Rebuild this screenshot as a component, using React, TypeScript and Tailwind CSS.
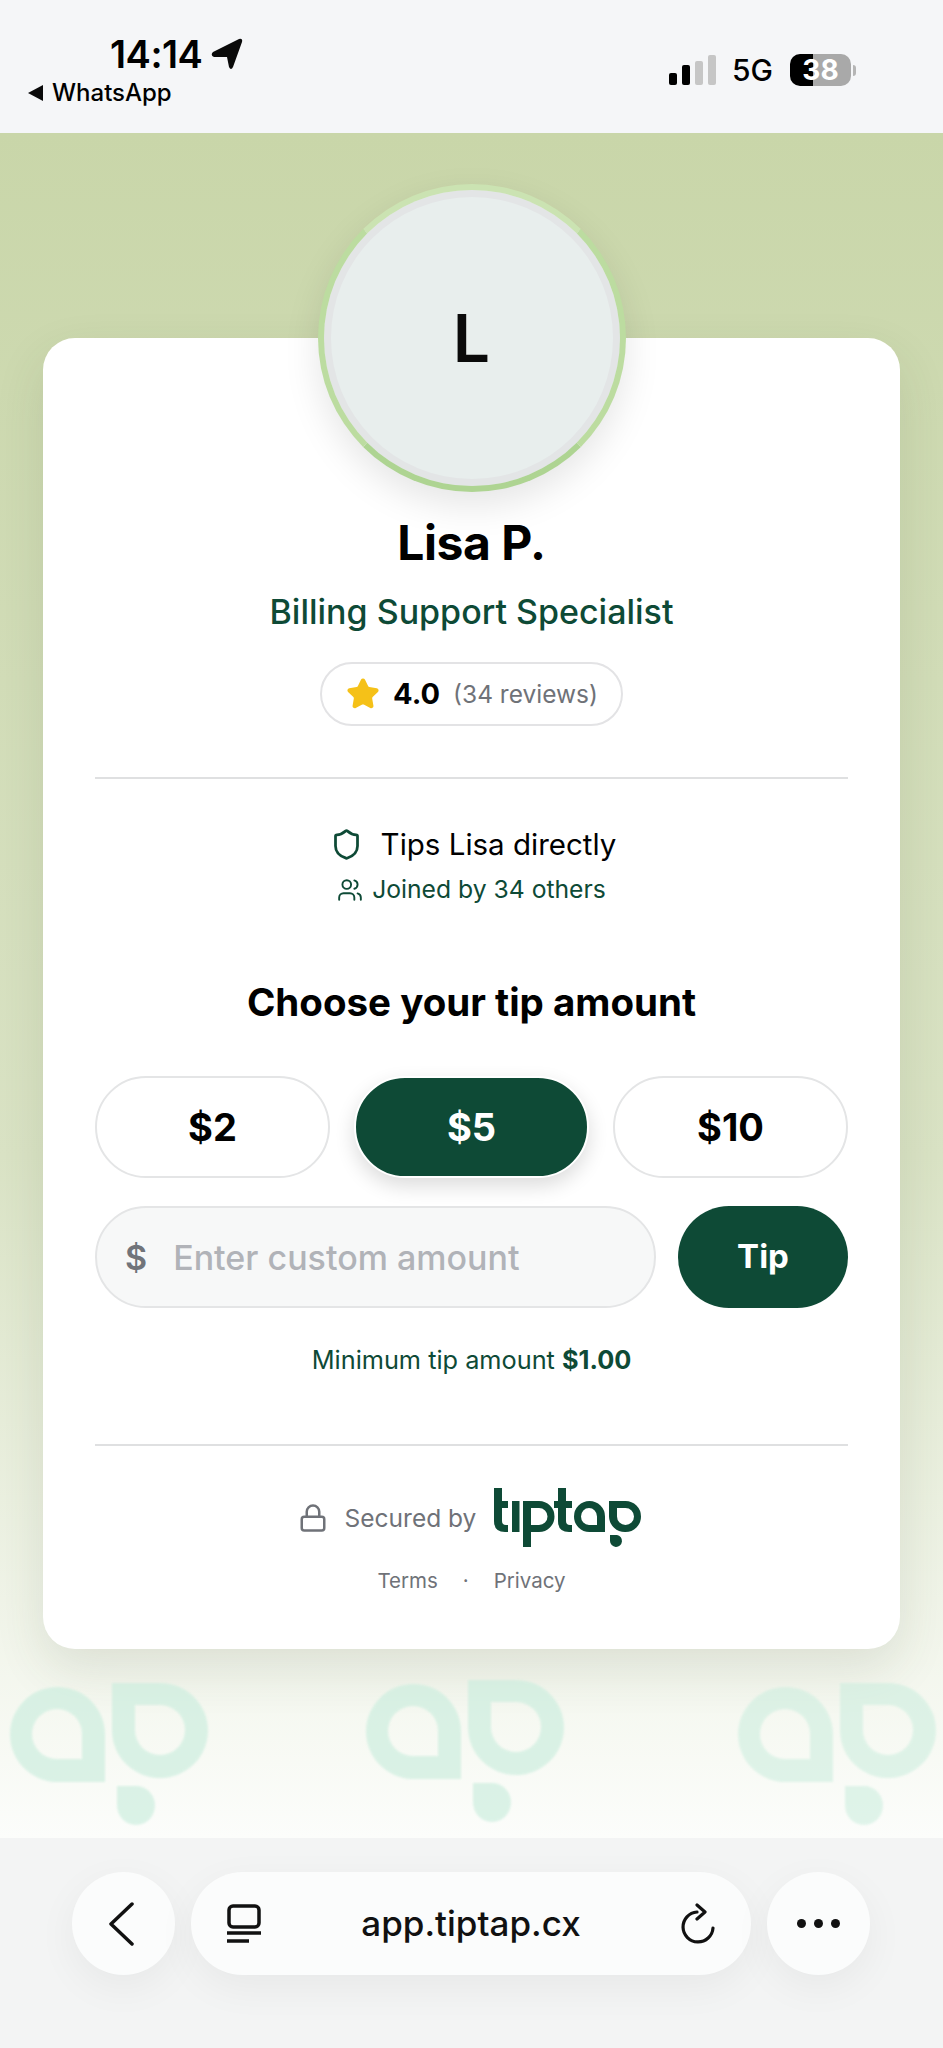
import { Lock, Shield, Star, Users } from 'lucide-react';

const amounts = ['$2', '$5', '$10'];

function TiptapLogo() {
  return (
    <svg width="150" height="62" viewBox="0 0 150 62" fill="#0e4a36" fillRule="evenodd">
      {/* t */}
      <path d="M1 1h8v13h6v7H9v13q0 4 4 4h2v7h-3Q1 45 1 34z" />
      {/* i */}
      <path d="M19 14h7.500v31H19z" />
      {/* p */}
      <path d="M30 14h16a15.500 15.500 0 0 1 0 31h-8v15h-8zM38 21v17h8a8.500 8.500 0 0 0 0-17z" />
      {/* t */}
      <path d="M65 1h8v13h6v7h-6v13q0 4 4 4h2v7h-3q-11 0-11-11V21h-4v-7h4z" />
      {/* a */}
      <path d="M112 45H96.500a15.500 15.500 0 1 1 15.500-15.500zM104 38v-8.500a8 8.500 0 1 0-8 8.500z" />
      {/* p with its dot */}
      <path d="M116 14h16.500a15.500 15.500 0 0 1 0 31 16 16 0 0 1-16.500-15.500zM124 21v8.500a8.500 8.500 0 1 0 8.500-8.500z" />
      <path d="M117 48h7a6 6 0 1 1-7 6z" />
    </svg>
  );
}

function Watermark({ className }: { className: string }) {
  return (
    <svg width="198" height="142" viewBox="0 0 198 142" fill="#cdeedf" fillRule="evenodd" className={className}>
      <path d="M95 99H47.500a47.500 47.500 0 1 1 47.500-47.500zM72 76V51a25 25 0 1 0-25 25z" />
      <path d="M102 0h48a48 47.500 0 1 1-48 47.500zM125 22v25a25 25 0 1 0 25-25z" />
      <path d="M107 103h19a19 19.500 0 1 1-19 19.500z" />
    </svg>
  );
}

export default function App() {
  return (
    <div className="flex h-[2048px] w-[943px] flex-col overflow-hidden bg-[#f5f6f8] font-['Inter',sans-serif] text-black">
      <header className="flex h-[133px] shrink-0 items-start justify-between pl-[28px] pr-[87px]">
        <div className="pt-[31px]">
          <div className="flex items-center pl-[82px]">
            <span className="text-[38px] leading-[46px] font-semibold tracking-[-0.5px]">14:14</span>
            <svg width="32" height="32" viewBox="0 0 32 32" className="ml-[9px]">
              <path d="M28 1q4-1 3 3l-9 25q-2 4-4 0l-2-10H3q-4-2-1-5z" fill="#0a0a0a" />
            </svg>
          </div>
          <div className="mt-[2px] flex items-center gap-[9px]">
            <svg width="15" height="16" viewBox="0 0 15 16">
              <path d="M15 0v16L0 8z" fill="#0a0a0a" />
            </svg>
            <span className="text-[24px] leading-[28px] font-medium">WhatsApp</span>
          </div>
        </div>
        <div className="flex items-center pt-[53px]">
          <div className="flex items-end gap-[5px]">
            <span className="h-[12px] w-[8px] rounded-[2px] bg-black" />
            <span className="h-[20px] w-[8px] rounded-[2px] bg-black" />
            <span className="h-[24px] w-[8px] rounded-[2px] bg-[#c6c6c6]" />
            <span className="h-[30px] w-[8px] rounded-[2px] bg-[#c6c6c6]" />
          </div>
          <span className="ml-[16px] text-[30px] leading-[34px] font-medium">5G</span>
          <div className="ml-[17px] h-[32px] w-[61px] rounded-[10px] bg-[linear-gradient(90deg,#000_37%,#a9a9a9_37%)] text-center text-[28px] leading-[32px] font-bold text-white">
            38
          </div>
          <span className="ml-[2px] h-[11px] w-[3px] rounded-r-full bg-[#b5b5b5]" />
        </div>
      </header>

      <main className="flex flex-1 flex-col bg-gradient-to-b from-[#c9d6a9] via-[#dae3c5] via-60% to-[#fcfdfb] px-[43px] pt-[205px]">
        <section className="flex h-[1311px] shrink-0 flex-col items-center rounded-[32px] bg-white px-[52px] shadow-[0_20px_50px_rgba(60,70,40,0.12)]">
          <div className="-mt-[154px] flex size-[308px] shrink-0 items-center justify-center rounded-full border-[6px] border-t-[#cbe3b2] border-x-[#bcdca0] border-b-[#aed492] bg-[#e8eeed] shadow-[inset_0_0_0_7px_#e3e5e6,0_14px_36px_rgba(0,0,0,0.1)]">
            <span className="text-[66px] leading-none font-semibold text-[#0a0a0a]">L</span>
          </div>
          <h1 className="mt-[21px] text-[48px] leading-[60px] font-bold tracking-[-0.5px]">Lisa P.</h1>
          <p className="mt-[19px] text-[34px] leading-[40px] font-medium text-[#0e4a36]">Billing Support Specialist</p>
          <div className="mt-[30px] flex h-[64px] w-[303px] items-center justify-center rounded-full border-2 border-[#e3e3e5] pl-[1px]">
            <Star size={34} fill="#f5c118" stroke="#f5c118" strokeLinejoin="round" />
            <span className="ml-[13px] text-[29px] font-bold">4.0</span>
            <span className="ml-[13px] text-[24.500px] text-[#6f7278]">(34 reviews)</span>
          </div>

          <div className="mt-[51px] h-[2px] w-full shrink-0 bg-[#dfe0e1]" />

          <div className="mt-[45px] flex h-[40px] items-center">
            <Shield size={33} stroke="#0e4a36" strokeWidth={2} className="ml-[3px]" />
            <span className="ml-[18px] text-[29.500px]">Tips Lisa directly</span>
          </div>
          <div className="mt-[6px] flex h-[40px] items-center">
            <Users size={26} stroke="#0e4a36" strokeWidth={1.75} />
            <span className="ml-[9px] text-[24.700px] text-[#0e4a36]">Joined by 34 others</span>
          </div>

          <h2 className="mt-[67px] text-[38.500px] leading-[50px] font-bold">Choose your tip amount</h2>

          <div className="mt-[49px] grid w-full grid-cols-3 gap-[24px]">
            {amounts.map((a) => (
              <button
                key={a}
                className={
                  a === '$5'
                    ? 'h-[102px] rounded-full border-2 border-white bg-[#0e4a36] text-[38px] font-bold text-white shadow-[0_8px_20px_rgba(0,0,0,0.14)]'
                    : 'h-[102px] rounded-full border-2 border-[#e4e5e6] bg-white text-[38px] font-bold'
                }
              >
                {a}
              </button>
            ))}
          </div>

          <div className="mt-[28px] flex w-full gap-[22px]">
            <div className="flex h-[102px] flex-1 items-center rounded-full border-2 border-[#e4e5e6] bg-[#f7f8f8] pl-[28px]">
              <span className="text-[34px] font-semibold text-[#71747a]">$</span>
              <span className="ml-[26px] text-[34px] font-medium text-[#b1b3b8]">Enter custom amount</span>
            </div>
            <button className="h-[102px] w-[170px] rounded-full bg-[#0e4a36] text-[33px] font-bold text-white">Tip</button>
          </div>

          <p className="mt-[36px] text-[25.300px] leading-[32px] text-[#0e4a36]">
            Minimum tip amount <strong className="font-bold">$1.00</strong>
          </p>

          <div className="mt-[68px] h-[2px] w-full shrink-0 bg-[#dfe0e1]" />

          <div className="mt-[41px] flex items-center">
            <Lock size={30} stroke="#6f7278" strokeWidth={2} className="-ml-[2px]" />
            <span className="ml-[17px] text-[24.500px] text-[#6f7278]">Secured by</span>
            <div className="ml-[17px]">
              <TiptapLogo />
            </div>
          </div>
          <div className="mt-[17px] flex items-center text-[20.500px] text-[#6f7278]">
            <span>Terms</span>
            <span className="mx-[25px]">·</span>
            <span>Privacy</span>
          </div>
        </section>

        <div className="-mx-[43px] mt-[34px] flex pl-[10px]">
          <Watermark className="shrink-0 opacity-70 blur-[1px]" />
          <Watermark className="ml-[158px] -mt-[3px] shrink-0 opacity-70 blur-[1px]" />
          <Watermark className="ml-[174px] shrink-0 opacity-60 blur-[1px]" />
        </div>
      </main>

      <nav className="flex h-[210px] shrink-0 items-start gap-[16px] bg-[#f3f4f4] pl-[72px] pr-[73px] pt-[34px]">
        <div className="flex size-[103px] shrink-0 items-center justify-center rounded-full bg-[#fbfcfc] shadow-[0_12px_40px_rgba(0,0,0,0.05)]">
          <svg width="26" height="44" viewBox="0 0 26 44" fill="none" stroke="#111" strokeWidth="3.500" strokeLinecap="round" strokeLinejoin="round" className="-ml-[5px]">
            <path d="M24 2 3 22l21 20" />
          </svg>
        </div>
        <div className="flex h-[103px] flex-1 items-center justify-between rounded-full bg-[#fbfcfc] pl-[36px] pr-[36px] shadow-[0_12px_40px_rgba(0,0,0,0.05)]">
          <svg width="34" height="40" viewBox="0 0 34 40" fill="none" stroke="#111" strokeWidth="3.500">
            <rect x="2" y="2" width="30" height="21" rx="4" />
            <path d="M0 29h34M0 37h22" />
          </svg>
          <span className="text-[35px] font-medium text-[#111]">app.tiptap.cx</span>
          <svg width="34" height="42" viewBox="0 0 34 42" fill="none" stroke="#111" strokeWidth="3.200" strokeLinecap="round" strokeLinejoin="round">
            <path d="M16 9a15 15 0 1 0 16 16" />
            <path d="M16 2l8 7-8 7" />
          </svg>
        </div>
        <div className="flex size-[103px] shrink-0 items-center justify-center gap-[8px] rounded-full bg-[#fbfcfc] shadow-[0_12px_40px_rgba(0,0,0,0.05)]">
          <span className="size-[9px] rounded-full bg-[#111]" />
          <span className="size-[9px] rounded-full bg-[#111]" />
          <span className="size-[9px] rounded-full bg-[#111]" />
        </div>
      </nav>
    </div>
  );
}
